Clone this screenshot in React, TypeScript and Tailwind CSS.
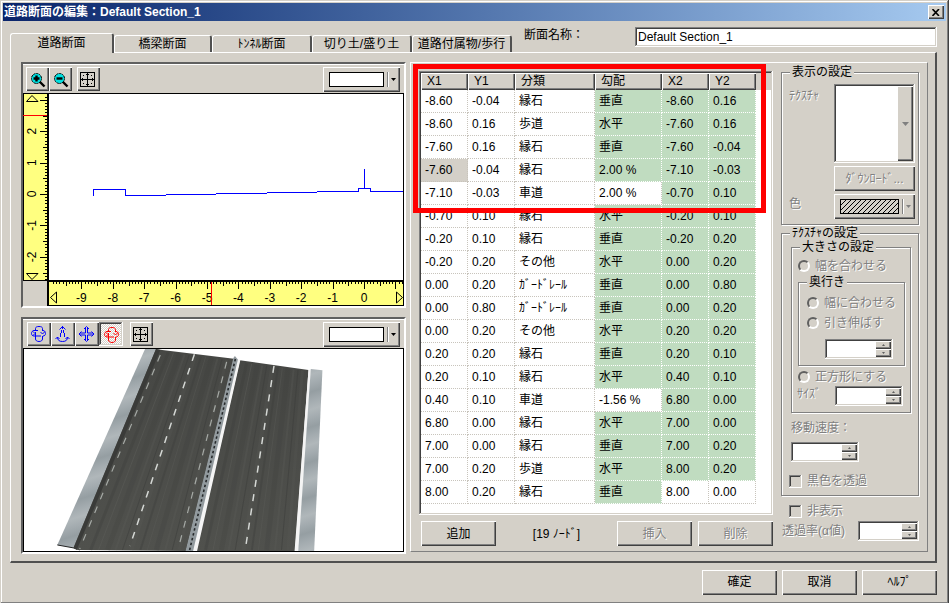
import { ReactNode, useState } from "react";
import clsx from "clsx";

const raised = "bg-[#d4d0c8] shadow-[inset_1px_1px_0_#fff,inset_-1px_-1px_0_#404040,inset_-2px_-2px_0_#808080]";
const sunken = "shadow-[inset_-1px_-1px_0_#fff,inset_1px_1px_0_#808080,inset_-2px_-2px_0_#d4d0c8,inset_2px_2px_0_#404040]";
const embossed = "text-[#808080] [text-shadow:1px_1px_0_#fff]";

const tabs = [
  { label: '道路断面', width: 'w-[104px]' },
  { label: '橋梁断面', width: 'w-[98px]' },
  { label: 'ﾄﾝﾈﾙ断面', width: 'w-[100px]' },
  { label: '切り土/盛り土', width: 'w-[100px]' },
  { label: '道路付属物/歩行', width: 'w-[100px]' },
];

const columns = [
  { label: 'X1', width: 'w-[47px]' },
  { label: 'Y1', width: 'w-[47px]' },
  { label: '分類', width: 'w-[80px]' },
  { label: '勾配', width: 'w-[67px]' },
  { label: 'X2', width: 'w-[47px]' },
  { label: 'Y2', width: 'w-[47px]' },
];

const nodes = [
  ['-8.60', '-0.04', '縁石', '垂直', '-8.60', '0.16'],
  ['-8.60', '0.16', '歩道', '水平', '-7.60', '0.16'],
  ['-7.60', '0.16', '縁石', '垂直', '-7.60', '-0.04'],
  ['-7.60', '-0.04', '縁石', '2.00 %', '-7.10', '-0.03'],
  ['-7.10', '-0.03', '車道', '2.00 %', '-0.70', '0.10'],
  ['-0.70', '0.10', '縁石', '水平', '-0.20', '0.10'],
  ['-0.20', '0.10', '縁石', '垂直', '-0.20', '0.20'],
  ['-0.20', '0.20', 'その他', '水平', '0.00', '0.20'],
  ['0.00', '0.20', 'ｶﾞｰﾄﾞﾚｰﾙ', '垂直', '0.00', '0.80'],
  ['0.00', '0.80', 'ｶﾞｰﾄﾞﾚｰﾙ', '垂直', '0.00', '0.20'],
  ['0.00', '0.20', 'その他', '水平', '0.20', '0.20'],
  ['0.20', '0.20', '縁石', '垂直', '0.20', '0.10'],
  ['0.20', '0.10', '縁石', '水平', '0.40', '0.10'],
  ['0.40', '0.10', '車道', '-1.56 %', '6.80', '0.00'],
  ['6.80', '0.00', '縁石', '水平', '7.00', '0.00'],
  ['7.00', '0.00', '縁石', '垂直', '7.00', '0.20'],
  ['7.00', '0.20', '歩道', '水平', '8.00', '0.20'],
  ['8.00', '0.20', '縁石', '垂直', '8.00', '0.00'],
];

function isLocked(row: number, col: number) {
  if (col < 3) return false;
  if (col === 3) return nodes[row][2] !== '車道';
  return row !== nodes.length - 1;
}

function PushButton({ children, disabled }: { children: ReactNode; disabled?: boolean }) {
  return (
    <button type="button" disabled={disabled} className={clsx("w-[75px] h-[25px]", raised, disabled && embossed)}>
      {children}
    </button>
  );
}

function ToolButton({ label, width, pressed, children }: { label: string; width: string; pressed?: boolean; children: ReactNode }) {
  return (
    <button
      type="button"
      aria-label={label}
      aria-pressed={pressed}
      className={clsx(
        "h-6 shrink-0",
        width,
        pressed && "bg-[repeating-conic-gradient(#fff_0_25%,#d4d0c8_0_50%)] bg-size-[2px_2px]",
        pressed ? sunken : raised
      )}
    >
      <svg viewBox="0 0 24 24" className="w-6 h-6" fill="none">{children}</svg>
    </button>
  );
}

function SwatchSelect({ label, width, disabled }: { label: string; width: string; disabled?: boolean }) {
  return (
    <div className={clsx("relative flex items-center h-[25px] pl-1.5", raised, width)}>
      {disabled ? (
        <svg className="flex-1 h-[15px] border border-black" preserveAspectRatio="none">
          <pattern id="hatch" width="5" height="5" patternUnits="userSpaceOnUse">
            <path d="M-1 1L1 -1M0 5L5 0M4 6L6 4" stroke="#000" strokeWidth="1" />
          </pattern>
          <rect width="100%" height="100%" fill="url(#hatch)" />
        </svg>
      ) : (
        <span className="flex-1 h-[15px] border border-black bg-white" />
      )}
      <span className="ml-[3px] w-0.5 h-[15px] border-l border-l-[#808080] border-r border-r-white" />
      <svg className="w-[11px] h-[5px]" viewBox="0 0 11 5">
        <path d="M2 1H7L4.500 4Z" fill={disabled ? '#808080' : '#000'} />
      </svg>
      <select aria-label={label} disabled={disabled} className="absolute inset-0 w-full h-full appearance-none bg-transparent">
        <option></option>
      </select>
    </div>
  );
}

function Spinner({ label, width }: { label: string; width: string }) {
  return (
    <div className={clsx("flex h-5 p-0.5 bg-white", sunken, width)}>
      <input type="text" aria-label={label} disabled className="min-w-0 flex-1 bg-white" />
      <div className="w-4 flex flex-col">
        <button type="button" disabled aria-label={`${label} +`} className={clsx("flex-1 flex items-center justify-center", raised)}>
          <svg width="3" height="2"><path d="M0 2L1.500 0L3 2Z" fill="#606060" /></svg>
        </button>
        <button type="button" disabled aria-label={`${label} -`} className={clsx("flex-1 flex items-center justify-center", raised)}>
          <svg width="3" height="2"><path d="M0 0L1.500 2L3 0Z" fill="#606060" /></svg>
        </button>
      </div>
    </div>
  );
}

function Option({ type, children, className }: { type: 'radio' | 'checkbox'; children: ReactNode; className?: string }) {
  return (
    <label className={clsx("flex items-center gap-[5px] h-4 whitespace-nowrap", embossed, className)}>
      <input
        type={type}
        disabled
        className={clsx(
          "appearance-none shrink-0",
          type === 'radio'
            ? "size-3 rounded-full border-2 border-t-[#606060] border-l-[#606060] border-b-white border-r-white"
            : clsx("size-[13px]", sunken)
        )}
      />
      {children}
    </label>
  );
}

function Group({ title, className, children }: { title: string; className?: string; children: ReactNode }) {
  return (
    <fieldset className={clsx("min-w-0 border border-[#808080] shadow-[inset_1px_1px_0_#fff,1px_1px_0_#fff]", className)}>
      <legend className="ml-2 px-0.5 bg-[#d4d0c8] leading-[14px] whitespace-nowrap">{title}</legend>
      {children}
    </fieldset>
  );
}

function FitIcon() {
  return (
    <g stroke="#000" shapeRendering="crispEdges">
      <path d="M3.500 5.500H17.500V19.500H3.500Z M10.500 6V19 M4 12.500H17" />
      <path d="M9 7.500H12 M9 17.500H12 M5.500 11V14 M15.500 11V14 M6 8.500H7 M14 8.500H15 M6 16.500H7 M14 16.500H15" />
    </g>
  );
}

function ZoomIcon({ plus }: { plus?: boolean }) {
  return (
    <g stroke="#000">
      <path d="M13.500 14.500L18.500 19.500" strokeWidth="2.400" />
      <circle cx="10.500" cy="11.500" r="5" fill="#00e0e0" strokeDasharray="2.200 0.600" />
      <path d={plus ? 'M7.500 11.500H13.500M10.500 8.500V14.500' : 'M7.500 11.500H13.500'} strokeWidth="2.400" />
    </g>
  );
}

function OrbitIcon({ color }: { color: string }) {
  return (
    <g stroke={color}>
      <path d="M8.500 8V6.500C8.500 5 10 4.500 12 4.500S15.500 5 15.500 6.500V9 M8.500 10V17C8.500 18.500 10 19.500 12 19.500S15.500 18.500 15.500 17V14" />
      <path d="M11 8.500H7C5.500 8.500 4.500 10 4.500 11.500S5.500 14 7 14H14 M16 8.500C17.500 8.500 18.500 10 18.500 11.500S17.500 14 16 14" />
      <path d="M6 9.500L8 11.500L6 13.500 M13.500 10L15.500 12L18 9.500" />
    </g>
  );
}

function SectionView() {
  const scale = 31.4;
  const ticks = (from: number, to: number) => Array.from({ length: to - from + 1 }, (_, i) => from + i);
  const tickLength = (n: number) => (n % 10 === 0 ? 8 : n % 5 === 0 ? 5 : 3);

  return (
    <svg viewBox="23 93 381 213" preserveAspectRatio="xMinYMin slice" className="block w-full h-[213px]" fontSize="12">
      <rect x="23" y="93" width="381" height="213" fill="#000" />
      <rect x="49" y="94" width="354" height="186" fill="#fff" />
      <rect x="24" y="94" width="23" height="186" fill="#ffff80" />
      <rect x="49" y="282" width="354" height="23" fill="#ffff80" />
      <rect x="23" y="281" width="24" height="25" fill="#d4d0c8" />
      <g stroke="#000" shapeRendering="crispEdges">
        {ticks(-27, 31).map(n => {
          const y = Math.round(194 - n * scale / 10) + 0.5;
          return <path key={n} d={`M47 ${y}H${48 - tickLength(n)}`} />;
        })}
        {ticks(-99, 12).map(n => {
          const x = Math.round(364 + n * scale / 10) + 0.5;
          return <path key={n} d={`M${x} 282V${281 + tickLength(n)}`} />;
        })}
      </g>
      <g textAnchor="middle">
        {[2, 1, 0, -1, -2].map(n => (
          <text key={n} transform={`translate(36 ${194 - n * scale}) rotate(-90)`}>{n}</text>
        ))}
        {ticks(-9, 0).map(n => (
          <text key={n} x={364 + n * scale} y="302">{n}</text>
        ))}
      </g>
      <path d="M26.500 101.500L32 95.500L38 101.500Z M26.500 273.500L32 279.500L38 273.500Z M56.500 292L50.500 297.500L56.500 303Z M396.500 292L402.500 297.500L396.500 303Z" fill="none" stroke="#000" />
      <path d="M23 115.500H47 M211.500 282V305" stroke="#f00" />
      <path
        d="M93.500 196V189.500H125.500V195.500H166 M166 194.500H216 M216 193.500H267 M267 192.500H317 M317 191.500H358.500V188.500H370.500V191.500H403 M364.500 169V188"
        fill="none"
        stroke="#00f"
        shapeRendering="crispEdges"
      />
    </svg>
  );
}

// [offset across the carriageway, width, opacity]
const streaks = [
  [0.06, 3, 0.3], [0.14, 1, 0.5], [0.23, 5, 0.18], [0.31, 2, 0.3], [0.38, 1, 0.5], [0.47, 4, 0.22],
  [0.56, 2, 0.35], [0.63, 1, 0.4], [0.72, 5, 0.2], [0.81, 2, 0.3], [0.88, 1, 0.5], [0.95, 3, 0.2],
];

function RoadView() {
  return (
    <svg viewBox="23 348 381 203" preserveAspectRatio="xMinYMin slice" className="block w-full flex-1 min-h-[203px] border border-black bg-white">
      <defs>
        <linearGradient id="walk" x1="0" y1="348" x2="5" y2="364" gradientUnits="userSpaceOnUse" spreadMethod="reflect">
          <stop offset="0" stopColor="#959ea2" />
          <stop offset="0.500" stopColor="#a3abaf" />
          <stop offset="1" stopColor="#b0b7ba" />
        </linearGradient>
        <linearGradient id="asphalt" x1="0" y1="0" x2="0" y2="1">
          <stop offset="0" stopColor="#464744" />
          <stop offset="1" stopColor="#50514d" />
        </linearGradient>
      </defs>
      <path d="M144.700 348L156 348L73 548L56.500 545Z" fill="url(#walk)" />
      <path d="M56.500 545L73 548L79 550" stroke="#222" fill="none" />
      <path d="M155.700 348L162 349L234 357.700L186 551L78 550L72.700 548Z" fill="url(#asphalt)" />
      <path d="M155.700 348L160 349L76 550L72.700 548Z" fill="#3a3b39" />
      <path d="M240 359.300L309 369L295.500 551H196Z" fill="url(#asphalt)" />
      {streaks.map(([t, width, opacity], i) => (
        <path
          key={i}
          d={`M${164 + t * 66} ${351 + t * 8}L${84 + t * 100} 550 M${243 + t * 63} ${362 + t * 8}L${200 + t * 93} 550`}
          stroke={i % 2 ? '#5d5e5a' : '#3b3c3a'}
          strokeWidth={width}
          opacity={opacity}
        />
      ))}
      <path d="M237 358.500L240.500 359L197 551H192Z M309 369L311.500 368.500L299 551H295Z" fill="#f4f4f4" />
      <path d="M311.300 368L323 369.300L314.700 551H298.700Z" fill="url(#walk)" />
      <path d="M233.500 357L235 355L238 358.500L193 551H185.500Z" fill="#929a9e" />
      <path d="M235.500 358L189.500 550" stroke="#25282a" strokeWidth="1.600" strokeDasharray="2.500 2.500" />
      <path d="M194.300 353.300L129.500 546" stroke="#d5d8d5" strokeWidth="1.500" strokeDasharray="7 7.500" />
      <path d="M274.300 365L245.500 549" stroke="#d5d8d5" strokeWidth="1.500" strokeDasharray="7 7.500" />
      <path d="M160 354L79 549 M226.700 361L178 549" stroke="#a6aaa6" strokeWidth="1.200" strokeDasharray="7 8" />
    </svg>
  );
}

export default function App() {
  const [activeTab, setActiveTab] = useState(0);
  const [name, setName] = useState('Default Section_1');

  return (
    <div className="min-h-screen flex flex-col p-[3px] bg-[#d4d0c8] text-black text-[12px] leading-4 font-['Liberation_Sans','Noto_Sans_CJK_JP',sans-serif] shadow-[inset_-1px_-1px_0_#404040,inset_1px_1px_0_#d4d0c8,inset_-2px_-2px_0_#808080,inset_2px_2px_0_#fff]">
      <header className="flex items-center justify-between h-[18px] pl-px pr-0.5 bg-linear-to-r from-[#0a246a] to-[#a6caf0]">
        <h1 className="font-bold text-white">道路断面の編集：Default Section_1</h1>
        <button type="button" aria-label="閉じる" className={clsx("w-4 h-3.5 flex items-center justify-center", raised)}>
          <svg width="8" height="7" viewBox="0 0 8 7"><path d="M0.500 0L7 7M7 0L0.500 7" stroke="#000" strokeWidth="1.600" /></svg>
        </button>
      </header>

      <div className="flex h-[31px] pl-[7px] pr-[9px]">
        <div role="tablist" className="flex items-end">
          {tabs.map((tab, index) => (
            <button
              key={tab.label}
              type="button"
              role="tab"
              aria-selected={index === activeTab}
              onClick={() => setActiveTab(index)}
              className={clsx(
                "rounded-t-[3px] border-t border-l border-white border-r-2 border-r-[#505050] whitespace-nowrap bg-[#d4d0c8]",
                tab.width,
                index === activeTab ? "relative h-5 -mb-px pb-px" : "h-[17px]"
              )}
            >
              {tab.label}
            </button>
          ))}
        </div>
        <label className="flex flex-1 items-start pt-1.5 pl-3">
          <span className="w-[111px]">断面名称：</span>
          <input
            type="text"
            value={name}
            onChange={e => setName(e.target.value)}
            className={clsx("min-w-0 flex-1 h-5 px-[3px] bg-white", sunken)}
          />
        </label>
      </div>

      <main className="flex flex-1 gap-1 ml-[7px] mr-[9px] pl-2.5 pt-[9px] pr-[7px] pb-[7px] border-t border-l border-white border-r-2 border-b-2 border-r-[#505050] border-b-[#505050]">
        <div className="flex-1 min-w-0 flex flex-col gap-[9px]">
          <section className="border-2 border-t-[#606060] border-l-[#606060] border-r-white border-b-white">
            <div className="flex items-center h-[29px] pl-[3px] pr-1 border-t border-white">
              <ToolButton label="拡大" width="w-[23px]"><ZoomIcon plus /></ToolButton>
              <ToolButton label="縮小" width="w-[23px]"><ZoomIcon /></ToolButton>
              <div className="flex flex-1 justify-between pl-[5px]">
                <ToolButton label="全体表示" width="w-[23px]"><FitIcon /></ToolButton>
                <SwatchSelect label="背景色" width="w-[77px]" />
              </div>
            </div>
            <SectionView />
          </section>

          <section className="flex-1 flex flex-col border-2 border-t-[#606060] border-l-[#606060] border-r-white border-b-white">
            <div className="flex items-center h-[29px] pl-1 pr-1 border-t border-white">
              <ToolButton label="回転" width="w-6"><OrbitIcon color="#00f" /></ToolButton>
              <ToolButton label="前後移動" width="w-6">
                <g stroke="#00f">
                  <path d="M11.500 4V7 M8.500 7.500L11.500 4.500L14.500 7.500 M10.500 8V11 M12.500 8V11 M9.500 11V15 M13.500 11V15" />
                  <path d="M6.500 15C6.500 18 8 19.500 11.500 19.500S16.500 18 16.500 15 M4.500 17L6.500 15L8.500 17 M14.500 17L16.500 15L18.500 17" />
                </g>
              </ToolButton>
              <ToolButton label="平行移動" width="w-6">
                <path
                  d="M9 7L11.500 4.500L14 7 M9 17L11.500 19.500L14 17 M6.500 9.500L4 12L6.500 14.500 M16.500 9.500L19 12L16.500 14.500 M10.500 6V11H5 M12.500 6V11H18 M5 13H10.500V18 M18 13H12.500V18"
                  stroke="#00f"
                />
              </ToolButton>
              <ToolButton label="自動回転" width="w-6" pressed>
                <g transform="translate(1 1)"><OrbitIcon color="#f00" /></g>
              </ToolButton>
              <div className="flex flex-1 justify-between pl-[7px]">
                <ToolButton label="全体表示" width="w-[23px]"><FitIcon /></ToolButton>
                <SwatchSelect label="背景色" width="w-[77px]" />
              </div>
            </div>
            <RoadView />
          </section>
        </div>

        <div className="flex shrink-0 gap-2 mb-0.5 px-2 border-t border-l border-white border-r border-b border-r-[#808080] border-b-[#808080]">
          <div className="flex flex-col w-[354px] pt-2">
            <div className={clsx("relative h-[444px] p-0.5 bg-white", sunken)}>
              <table className="w-full table-fixed border-separate border-spacing-0 text-left">
                <thead>
                  <tr>
                    {columns.map(column => (
                      <th key={column.label} scope="col" className={clsx("h-[17px] p-0 pl-1.5 font-normal leading-[15px]", raised, column.width)}>
                        {column.label}
                      </th>
                    ))}
                    <td className="p-0 bg-[#d4d0c8]"></td>
                  </tr>
                </thead>
                <tbody>
                  {nodes.map((node, row) => (
                    <tr key={row}>
                      {node.map((value, col) => (
                        <td
                          key={col}
                          className={clsx(
                            "h-[23px] p-0 pl-1 border-r border-b border-dotted whitespace-nowrap",
                            isLocked(row, col) ? "bg-[#c0dcc0] border-white" : "border-[#c8c4bc]",
                            row === 3 && col === 0 && "bg-[#d4d0c8]"
                          )}
                        >
                          {value}
                        </td>
                      ))}
                    </tr>
                  ))}
                </tbody>
              </table>
              <div className="absolute -top-[7px] -left-1.5 right-[7px] h-[149px] border-[5px] border-[#f00] pointer-events-none" />
            </div>
            <div className="flex items-center mt-1.5 pl-0.5">
              <PushButton>追加</PushButton>
              <span className="flex-1 text-center">[19 ﾉｰﾄﾞ]</span>
              <div className="flex gap-1.5">
                <PushButton disabled>挿入</PushButton>
                <PushButton disabled>削除</PushButton>
              </div>
            </div>
          </div>

          <div className="w-[138px] pt-0.5">
            <Group title="表示の設定" className="pb-[5px]">
              <div className="grid grid-cols-[45px_81px] gap-y-[3px] pl-[7px] pt-[5px]">
                <label htmlFor="texture" className={clsx("pt-1", embossed)}>ﾃｸｽﾁｬ</label>
                <div className={clsx("relative flex justify-end h-[79px] p-0.5 bg-white", sunken)}>
                  <span className={clsx("w-4 flex items-center justify-center", raised)}>
                    <svg width="7" height="4"><path d="M0 0H7L3.500 4Z" fill="#808080" /></svg>
                  </span>
                  <select id="texture" disabled className="absolute inset-0 w-full h-full appearance-none bg-transparent">
                    <option></option>
                  </select>
                </div>
                <button type="button" disabled className={clsx("col-start-2 h-[25px]", raised, embossed)}>ﾀﾞｳﾝﾛｰﾄﾞ...</button>
                <span className={clsx("col-start-1 pt-0.5", embossed)}>色</span>
                <SwatchSelect label="色" width="w-[81px]" disabled />
              </div>
            </Group>

            <Group title="ﾃｸｽﾁｬの設定" className="mt-px pb-1.5">
              <Group title="大きさの設定" className="ml-[9px] mr-[7px] pb-1.5">
                <Option type="radio" className="mt-1 ml-1.5">幅を合わせる</Option>
                <Group title="奥行き" className="mt-px ml-1.5 mr-[5px] pb-1.5">
                  <div className="flex flex-col gap-1 pt-1.5 pl-2">
                    <Option type="radio">幅に合わせる</Option>
                    <Option type="radio">引き伸ばす</Option>
                  </div>
                  <div className="mt-2 ml-[26px]">
                    <Spinner label="奥行き" width="w-[68px]" />
                  </div>
                </Group>
                <Option type="radio" className="mt-[3px] ml-1.5">正方形にする</Option>
                <div className="flex mt-px pl-[5px]">
                  <span className={clsx("w-[38px]", embossed)}>ｻｲｽﾞ</span>
                  <Spinner label="ｻｲｽﾞ" width="w-[68px]" />
                </div>
              </Group>
              <div className="mt-[7px] pl-[9px]">
                <p className={clsx("mb-1.5", embossed)}>移動速度：</p>
                <Spinner label="移動速度" width="w-[68px]" />
              </div>
              <Option type="checkbox" className="mt-[11px] ml-[7px]">黒色を透過</Option>
            </Group>

            <Option type="checkbox" className="mt-[7px] ml-2">非表示</Option>
            <div className="flex items-center justify-between mt-0.5 pl-px">
              <span className={clsx("whitespace-nowrap", embossed)}>透過率(α値)</span>
              <Spinner label="透過率" width="w-[61px]" />
            </div>
          </div>
        </div>
      </main>

      <footer className="flex justify-end gap-[5px] pt-[7px] pr-[9px] pb-1.5">
        <PushButton>確定</PushButton>
        <PushButton>取消</PushButton>
        <PushButton>ﾍﾙﾌﾟ</PushButton>
      </footer>
    </div>
  );
}
